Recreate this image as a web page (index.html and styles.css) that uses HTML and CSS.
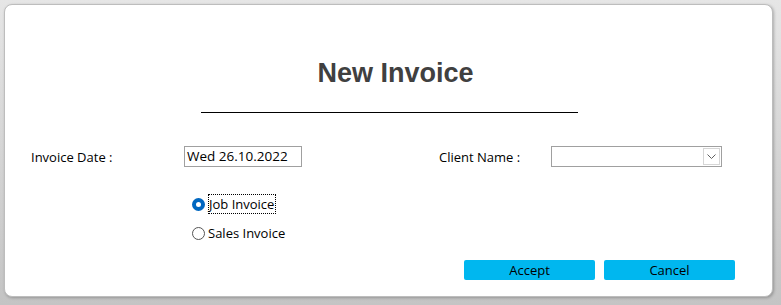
FILE: index.html
```html
<!DOCTYPE html>
<html lang="en">
<head>
    <meta charset="UTF-8">
    <meta name="viewport" content="width=device-width, initial-scale=1.0">
    <title>New Invoice</title>
    <link rel="stylesheet" href="styles.css">
</head>
<body>
    <div class="dialog">
        <h2 class="title">New Invoice</h2>
        <div class="rule"></div>
        <div class="fields">
            <div class="field">
                <label class="label">Invoice Date :</label>
                <div class="datebox">Wed 26.10.2022</div>
            </div>
            <div class="field client">
                <label class="label">Client Name :</label>
                <div class="combo">
                    <span class="arrow">
                        <svg width="9" height="5" viewBox="0 0 9 5"><path d="M0.5 0.5 L4.5 4.5 L8.5 0.5" fill="none" stroke="#606060" stroke-width="1"/></svg>
                    </span>
                </div>
            </div>
        </div>
        <div class="options">
            <div class="option">
                <span class="radio checked"></span>
                <span class="focused">Job Invoice</span>
            </div>
            <div class="option">
                <span class="radio"></span>
                <span>Sales Invoice</span>
            </div>
        </div>
        <div class="actions">
            <button class="btn">Accept</button>
            <button class="btn">Cancel</button>
        </div>
    </div>
</body>
</html>
```

FILE: styles.css
```css
html, body {
    margin: 0;
    height: 305px;
}
body {
    font-family: "Open Sans", "Noto Sans", sans-serif;
    font-size: 13px;
    color: #000;
    background: linear-gradient(#e6e6e6, #c4c4c4);
    padding: 4px 8px 8px 4px;
    box-sizing: border-box;
    overflow: hidden;
}
.dialog {
    height: 293px;
    background: #fff;
    border: 1px solid #bdbdbd;
    border-radius: 8px;
    box-shadow: 1px 1px 3px rgba(0, 0, 0, 0.25);
    box-sizing: border-box;
    padding-top: 52px;
}
.title {
    margin: 0;
    text-align: center;
    font-family: "Liberation Sans", Arial, sans-serif;
    font-size: 27px;
    font-weight: bold;
    color: #404040;
    line-height: 32px;
    padding-left: 14px;
}
.rule {
    width: 377px;
    height: 1px;
    background: #000;
    margin: 23px 0 0 196px;
}
.fields {
    display: flex;
    margin-top: 33px;
    padding-left: 26px;
}
.field {
    display: flex;
    align-items: center;
}
.label {
    width: 153px;
}
.client {
    margin-left: 137px;
}
.client .label {
    width: 112px;
}
.datebox {
    width: 118px;
    height: 21px;
    border: 1px solid #a0a0a0;
    box-sizing: border-box;
    padding-left: 2px;
    line-height: 18px;
    font-size: 13.5px;
}
.combo {
    width: 171px;
    height: 21px;
    border: 1px solid #a0a0a0;
    box-sizing: border-box;
    display: flex;
    justify-content: flex-end;
    padding: 1px;
}
.arrow {
    width: 15px;
    border: 1px solid #d6d6d6;
    display: flex;
    align-items: center;
    justify-content: center;
}
.options {
    margin: 27px 0 0 187px;
}
.option {
    display: flex;
    align-items: center;
    height: 20px;
    margin-bottom: 9px;
}
.radio {
    width: 11px;
    height: 11px;
    border: 1px solid #555;
    border-radius: 50%;
    margin-right: 3px;
    box-sizing: content-box;
}
.radio.checked {
    border: 4px solid #0067c0;
    width: 5px;
    height: 5px;
    background: #fff;
}
.focused {
    border: 1px dotted #000;
    padding: 0 1px 0 0;
    line-height: 18px;
}
.actions {
    display: flex;
    justify-content: flex-end;
    gap: 9px;
    margin: 17px 37px 0 0;
}
.btn {
    width: 131px;
    height: 20px;
    border: none;
    border-radius: 2px;
    background-color: #00b7ef;
    font-family: "Open Sans", "Noto Sans", sans-serif;
    font-size: 13px;
    color: #000;
    padding: 0;
    cursor: pointer;
}
```
